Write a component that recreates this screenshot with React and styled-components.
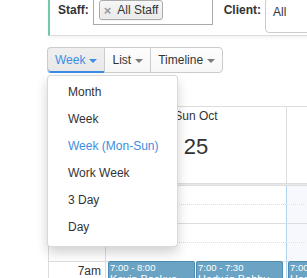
import React from "react";
import styled, { createGlobalStyle } from "styled-components";

const Global = createGlobalStyle`
  html, body { margin: 0; padding: 0; background: #fff; }
  body { font-family: "Liberation Sans", Arial, Helvetica, sans-serif; font-size: 12px; color: #333; }
  * { box-sizing: border-box; }
`;

const Page = styled.div`
  width: 307px;
  height: 278px;
  overflow: hidden;
  background: #fff;
`;

const FilterPanel = styled.div`
  margin-left: 48px;
  width: 400px;
  height: 36px;
  display: flex;
  align-items: flex-start;
  padding-left: 8px;
  border-left: 2px solid #72c9a9;
  border-bottom: 1px solid #dcdcdc;
  box-shadow: 0 2px 3px rgba(0, 0, 0, 0.05);
  background: #fff;
`;

const FilterLabel = styled.span`
  font-weight: bold;
  font-size: 12px;
  line-height: 14px;
  margin-top: 3px;
  margin-left: ${(p) => p.$gap || 0}px;
  color: #333;
`;

const StaffBox = styled.div`
  width: 120px;
  height: 27px;
  margin-top: -2px;
  margin-left: 4px;
  border: 1px solid #aaa;
  padding: 1px 5px;
  background: #fff;
`;

const Chip = styled.span`
  display: inline-flex;
  align-items: center;
  gap: 6px;
  height: 20px;
  padding: 0 4px 1px 4px;
  border: 1px solid #aaa;
  border-radius: 3px;
  background: linear-gradient(#f6f6f6, #e9e9e9);
  box-shadow: 0 0 2px #fff inset, 0 1px 0 rgba(0, 0, 0, 0.05);
  font-size: 12px;
  line-height: 16px;
  color: #333;
`;

const ChipX = styled.span`
  font-size: 13px;
  font-weight: bold;
  color: #999;
  line-height: 16px;
  margin-top: 2px;
`;

const ClientSelect = styled.div`
  width: 120px;
  height: 35px;
  margin-top: -2px;
  margin-left: 4px;
  border: 1px solid #ccc;
  border-radius: 4px;
  padding: 6px 0 0 7px;
  font-size: 12px;
  line-height: 14px;
  color: #333;
  background: #fff;
`;

const Toolbar = styled.div`
  margin-top: 11px;
  padding-left: 47px;
  display: flex;
`;

const ViewGroup = styled.div`
  position: relative;
  display: flex;
`;

const ViewButton = styled.div`
  height: 26px;
  display: flex;
  align-items: center;
  gap: 4px;
  padding: 0 7px;
  margin-left: ${(p) => (p.$first ? 0 : -1)}px;
  border: 1px solid #ccc;
  border-radius: ${(p) => (p.$first ? "4px 0 0 4px" : p.$last ? "0 4px 4px 0" : "0")};
  background: ${(p) => (p.$active ? "linear-gradient(#efefef, #e8e8e8)" : "linear-gradient(#fdfdfd, #f7f7f7)")};
  color: ${(p) => (p.$active ? "#3b8ee4" : "#333")};
  font-size: 12px;
  line-height: 14px;
  border-bottom-color: ${(p) => (p.$active ? "#3b8ee4" : "#ccc")};
  box-shadow: ${(p) => (p.$active ? "inset 0 -1px 0 #3b8ee4" : "none")};
`;

const Caret = styled.span`
  width: 0;
  height: 0;
  border-left: 4px solid transparent;
  border-right: 4px solid transparent;
  border-top: 4px solid ${(p) => p.$color};
  margin-top: 1px;
`;

const Menu = styled.ul`
  position: absolute;
  top: calc(100% + 2px);
  left: 0;
  z-index: 10;
  width: 131px;
  margin: 0;
  padding: 3px 0 5px;
  list-style: none;
  background: #fff;
  border: 1px solid rgba(0, 0, 0, 0.15);
  border-radius: 4px;
  box-shadow: 0 6px 12px rgba(0, 0, 0, 0.175);
`;

const MenuItem = styled.li`
  height: 27px;
  line-height: 27px;
  padding-left: 20px;
  font-size: 12px;
  color: ${(p) => (p.$active ? "#3d8ee0" : "#333")};
  white-space: nowrap;
`;

const Calendar = styled.div`
  margin-top: 33px;
  margin-left: 48px;
  width: 440px;
  border-left: 1px solid #ddd;
  border-top: 1px solid #ddd;
`;

const Row = styled.div`
  display: grid;
  grid-template-columns: 56px 181px 200px;
  height: ${(p) => p.$h}px;
  border-bottom: ${(p) => (p.$line ? `1px ${p.$line} #ddd` : "none")};
`;

const Gutter = styled.div`
  text-align: right;
  padding-right: 4px;
  font-size: 12px;
  line-height: 16px;
  padding-top: 1px;
  color: #333;
`;

const DayCell = styled.div`
  border-left: 1px solid ${(p) => (p.$today ? "#b1d4f2" : "#ddd")};
  background: ${(p) => (p.$today ? "#f7f7fe" : "transparent")};
  display: flex;
  gap: 1px;
  padding: ${(p) => (p.$today ? "0 0 0 1px" : "0 3px 0 2px")};
`;

const DayHead = styled.div`
  border-left: 1px solid #ddd;
  display: flex;
  flex-direction: column;
  align-items: center;
  padding-top: 2px;
`;

const DayName = styled.span`
  font-size: 12px;
  line-height: 14px;
  color: #333;
`;

const DayNum = styled.span`
  font-size: 22px;
  line-height: 26px;
  margin-top: 11px;
  color: #333;
`;

const Divider = styled.div`
  height: 3px;
  border-top: 1px solid #ddd;
  border-bottom: 1px solid #ddd;
  background: #e9e9e9;
`;

const Event = styled.div`
  flex: ${(p) => (p.$w ? `0 0 ${p.$w}px` : "1")};
  min-width: 0;
  height: 30px;
  margin-top: -1px;
  background: #6aa3c4;
  border: 1px solid #4f8cb2;
  border-radius: 2px;
  padding: 0 1px;
  color: #fff;
  font-size: 9px;
  line-height: 11px;
  overflow: hidden;
  white-space: nowrap;
`;

const EvTime = styled.div`
  font-size: 9.5px;
`;

const EvTitle = styled.div`
  font-size: 11px;
  line-height: 13px;
  overflow: hidden;
  text-overflow: clip;
`;

const views = ["Month", "Week", "Week (Mon-Sun)", "Work Week", "3 Day", "Day"];

export default function App() {
  return (
    <Page>
      <Global />
      <FilterPanel>
        <FilterLabel>Staff:</FilterLabel>
        <StaffBox>
          <Chip>
            <ChipX>×</ChipX>
            All Staff
          </Chip>
        </StaffBox>
        <FilterLabel $gap={11}>Client:</FilterLabel>
        <ClientSelect>All</ClientSelect>
      </FilterPanel>

      <Toolbar>
        <ViewGroup>
          <ViewButton $first $active>
            Week <Caret $color="#3b8ee4" />
          </ViewButton>
          <ViewButton>
            List <Caret $color="#7a7a7a" />
          </ViewButton>
          <ViewButton $last>
            Timeline <Caret $color="#7a7a7a" />
          </ViewButton>
          <Menu>
            {views.map((v) => (
              <MenuItem key={v} $active={v === "Week (Mon-Sun)"}>
                {v}
              </MenuItem>
            ))}
          </Menu>
        </ViewGroup>
      </Toolbar>

      <Calendar>
        <Row $h={76}>
          <Gutter />
          <DayHead>
            <DayName>Sun Oct</DayName>
            <DayNum>25</DayNum>
          </DayHead>
          <DayHead />
        </Row>
        <Divider />
        <Row $h={19} $line="dotted">
          <Gutter />
          <DayCell />
          <DayCell $today />
        </Row>
        <Row $h={19} $line="solid">
          <Gutter />
          <DayCell />
          <DayCell $today />
        </Row>
        <Row $h={19} $line="dotted">
          <Gutter />
          <DayCell />
          <DayCell $today />
        </Row>
        <Row $h={19} $line="solid">
          <Gutter />
          <DayCell />
          <DayCell $today />
        </Row>
        <Row $h={40}>
          <Gutter>7am</Gutter>
          <DayCell>
            <Event>
              <EvTime>7:00 - 8:00</EvTime>
              <EvTitle>Kevin Backus</EvTitle>
            </Event>
            <Event>
              <EvTime>7:00 - 7:30</EvTime>
              <EvTitle>Hedwig Bobby</EvTitle>
            </Event>
          </DayCell>
          <DayCell $today>
            <Event $w={90}>
              <EvTime>7:00 - 7:30</EvTime>
              <EvTitle>Harold Penn</EvTitle>
            </Event>
          </DayCell>
        </Row>
      </Calendar>
    </Page>
  );
}
